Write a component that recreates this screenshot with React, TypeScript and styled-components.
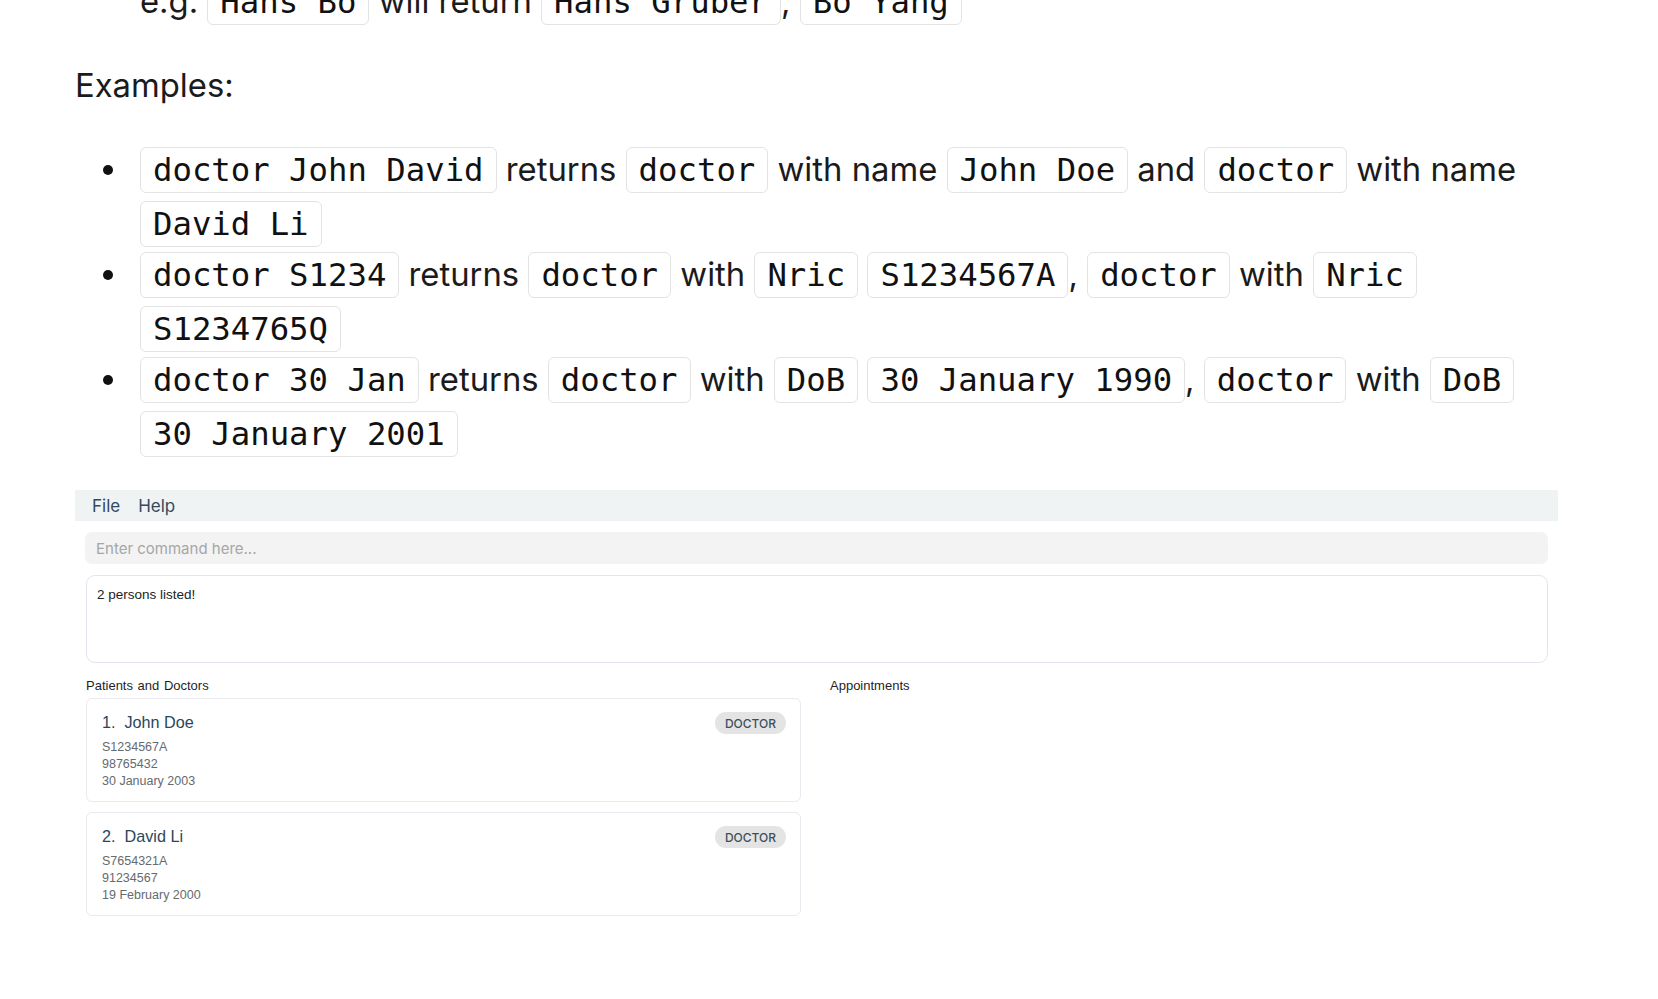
import React from "react";
import styled, { createGlobalStyle } from "styled-components";

const GlobalStyle = createGlobalStyle`
  html, body { margin: 0; padding: 0; background: #ffffff; }
  body { font-family: Inter, "Liberation Sans", sans-serif; color: #1a1a1a; overflow: hidden; }
`;

const Page = styled.div`
  width: 1483px;
  padding-left: 75px;
`;

const Article = styled.article`
  margin-top: -26px;
  font-family: Inter, "Liberation Sans", sans-serif;
  font-size: 32.8px;
  line-height: 54px;
  color: #1b1b1b;
`;

const Continuation = styled.div`
  padding-left: 65px;
  white-space: nowrap;
`;

const Paragraph = styled.p`
  margin: 30px 0 0;
`;

const Code = styled.code`
  font-family: "DejaVu Sans Mono", "Liberation Mono", monospace;
  font-size: 32.3px;
  line-height: 1;
  padding: 3px 12px;
  border: 1px solid #e3e3e3;
  border-radius: 6px;
  background: #ffffff;
  color: #111;
`;

const List = styled.ul`
  margin: 30px 0 0;
  padding-left: 65px;
  list-style: none;
`;

const Item = styled.li`
  & + & { margin-top: -3px; }
  &::before {
    content: "";
    display: inline-block;
    width: 10px;
    height: 10px;
    border-radius: 50%;
    background: #111;
    margin-left: -37px;
    margin-right: 27px;
    vertical-align: 6px;
  }
`;

const AppShot = styled.section`
  margin-top: 30px;
  width: 1483px;
  font-family: Inter, "Liberation Sans", sans-serif;
`;

const MenuBar = styled.nav`
  height: 31px;
  background: #eff3f4;
  display: flex;
  align-items: center;
  gap: 18px;
  padding-left: 17px;
  font-size: 17px;
  color: #34495e;
`;

const MenuItem = styled.span``;

const AppBody = styled.div`
  padding: 11px 10px 0 10px;
  display: flex;
  flex-direction: column;
  gap: 11px;
`;

const CommandInput = styled.input`
  box-sizing: border-box;
  width: 100%;
  height: 32px;
  border: none;
  border-radius: 7px;
  background: #f3f3f3;
  padding: 0 11px;
  font-family: Inter, "Liberation Sans", sans-serif;
  font-size: 15px;
  color: #333;
  outline: none;
  &::placeholder { color: #a6a6a6; }
`;

const ResultBox = styled.div`
  box-sizing: border-box;
  height: 88px;
  margin-left: 1px;
  border: 1px solid #e4e4ee;
  border-radius: 9px;
  padding: 11px 10px;
  font-family: "Liberation Sans", Arial, sans-serif;
  font-size: 13.5px;
  color: #222;
`;

const Columns = styled.div`
  display: grid;
  grid-template-columns: 715px 1fr;
  column-gap: 29px;
  margin-left: 1px;
  margin-top: 5px;
`;

const Column = styled.div`
  display: flex;
  flex-direction: column;
  gap: 10px;
`;

const ColumnLabel = styled.div`
  font-family: "Liberation Sans", Arial, sans-serif;
  font-size: 13px;
  word-spacing: 1px;
  color: #1f1f1f;
  height: 14px;
  line-height: 14px;
  margin-bottom: -5px;
`;

const Card = styled.div`
  box-sizing: border-box;
  height: 104px;
  border: 1px solid #e9e9f0;
  border-radius: 6px;
  padding: 12px 14px 0 15px;
  display: flex;
  justify-content: space-between;
  align-items: flex-start;
`;

const CardMain = styled.div`
  display: flex;
  flex-direction: column;
  font-family: "Liberation Sans", Arial, sans-serif;
`;

const Name = styled.div`
  font-size: 16.2px;
  color: #2b4659;
  line-height: 22px;
  margin-bottom: 6px;
  white-space: pre;
`;

const Detail = styled.div`
  font-size: 12.5px;
  line-height: 17px;
  color: #666a6e;
`;

const Badge = styled.span`
  display: inline-flex;
  align-items: center;
  height: 22px;
  padding: 0 10px;
  border-radius: 11px;
  background: #e4e4e4;
  color: #3d4f5c;
  font-size: 12px;
  font-weight: 500;
  margin-top: 1px;
`;

type Person = { idx: number; name: string; nric: string; phone: string; dob: string };

const people: Person[] = [
  { idx: 1, name: "John Doe", nric: "S1234567A", phone: "98765432", dob: "30 January 2003" },
  { idx: 2, name: "David Li", nric: "S7654321A", phone: "91234567", dob: "19 February 2000" },
];

export default function App() {
  return (
    <>
      <GlobalStyle />
      <Page>
        <Article>
          <Continuation>
            e.g. <Code>Hans Bo</Code> will return <Code>Hans Gruber</Code>, <Code>Bo Yang</Code>
          </Continuation>
          <Paragraph>Examples:</Paragraph>
          <List>
            <Item>
              <Code>doctor John David</Code> returns <Code>doctor</Code> with name <Code>John Doe</Code> and{" "}
              <Code>doctor</Code> with name <Code>David Li</Code>
            </Item>
            <Item>
              <Code>doctor S1234</Code> returns <Code>doctor</Code> with <Code>Nric</Code> <Code>S1234567A</Code>,{" "}
              <Code>doctor</Code> with <Code>Nric</Code> <Code>S1234765Q</Code>
            </Item>
            <Item>
              <Code>doctor 30 Jan</Code> returns <Code>doctor</Code> with <Code>DoB</Code> <Code>30 January 1990</Code>,{" "}
              <Code>doctor</Code> with <Code>DoB</Code> <Code>30 January 2001</Code>
            </Item>
          </List>
        </Article>
        <AppShot>
          <MenuBar>
            <MenuItem>File</MenuItem>
            <MenuItem>Help</MenuItem>
          </MenuBar>
          <AppBody>
            <CommandInput placeholder="Enter command here..." readOnly />
            <ResultBox>2 persons listed!</ResultBox>
            <Columns>
              <Column>
                <ColumnLabel>Patients and Doctors</ColumnLabel>
                {people.map((p) => (
                  <Card key={p.idx}>
                    <CardMain>
                      <Name>{`${p.idx}.  ${p.name}`}</Name>
                      <Detail>{p.nric}</Detail>
                      <Detail>{p.phone}</Detail>
                      <Detail>{p.dob}</Detail>
                    </CardMain>
                    <Badge>DOCTOR</Badge>
                  </Card>
                ))}
              </Column>
              <Column>
                <ColumnLabel>Appointments</ColumnLabel>
              </Column>
            </Columns>
          </AppBody>
        </AppShot>
      </Page>
    </>
  );
}
